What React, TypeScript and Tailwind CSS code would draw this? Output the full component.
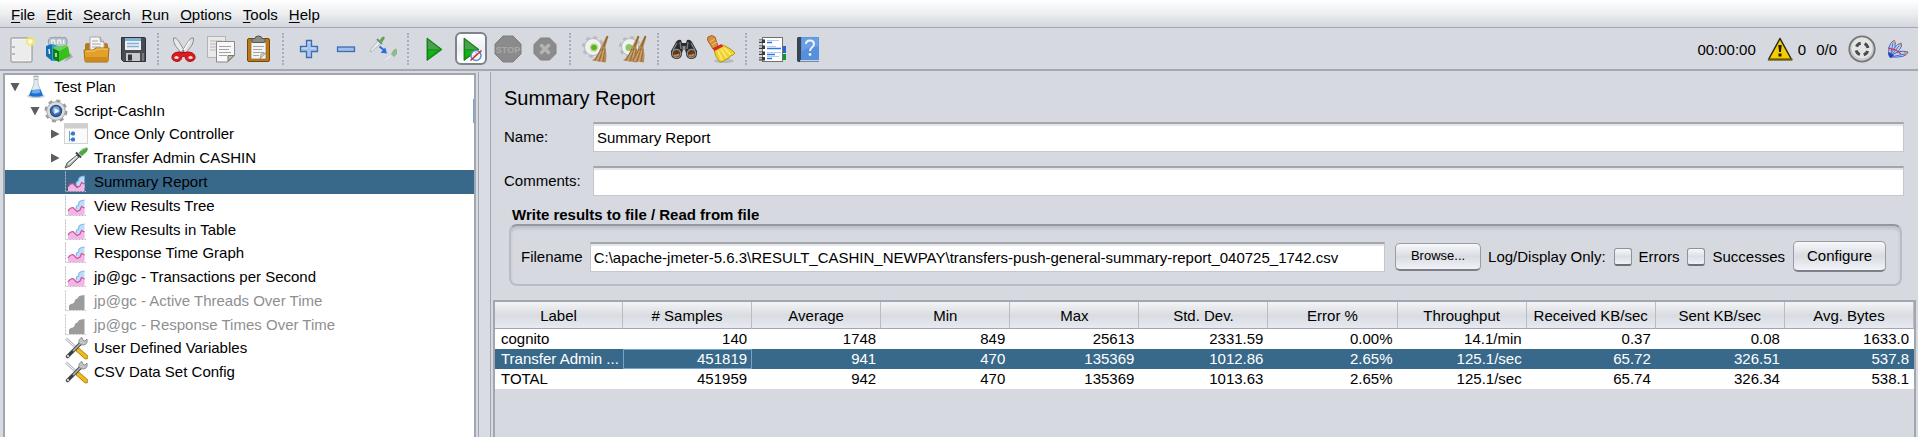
import type { ReactNode } from "react";

function Svg({ children, size = 28 }: { children: ReactNode; size?: number }) {
  return (
    <svg width={size} height={size} viewBox={`0 0 ${size} ${size}`} aria-hidden="true" className="shrink-0">
      {children}
    </svg>
  );
}

/* ---------- toolbar icons ---------- */

const NewIcon = () => (
  <Svg>
    <rect x="3" y="3" width="21" height="24" rx="1" fill="#f4f4f4" stroke="#8a8a8a" />
    <rect x="5" y="5" width="17" height="20" fill="#ececec" />
    <path d="M4 12h3M4 19h3" stroke="#a9a9a9" strokeWidth="1.5" />
    <circle cx="22.500" cy="6.500" r="4.800" fill="#f6e86a" opacity=".75" />
    <circle cx="22.500" cy="6.500" r="2.200" fill="#fffbd0" />
  </Svg>
);

const TemplatesIcon = () => (
  <Svg>
    <path d="M4 10C2 5 5 1 8 3q2-2 4 0 3-2 5 0 4-2 5 2 1 4-2 7H5z" fill="#b9c4cb" stroke="#8e9aa2" />
    <path d="M7 9Q6 5 8 5t2 4M13 9q-1-4 1-4t2 4M19 9q-1-3 0-4" stroke="#f1f4f6" strokeWidth="1.400" fill="none" />
    <path d="m1 11 6-2v17l-6-5z" fill="#1270b2" />
    <path d="m7 9 6 2v15H7z" fill="#2f9cda" />
    <path d="m25 18 3 4-9 5z" fill="#7c8084" opacity=".55" />
    <path d="m8 13 6 3v11l-6-3z" fill="#12800f" />
    <path d="m14 16 9-5 2 10-11 6z" fill="#35c01c" />
    <path d="m8 13 3-2 4 1 5-2 3 1-9 5z" fill="#67d44d" />
    <path d="m4 14 .5 5M11 18v4" stroke="#fff" strokeWidth="1.300" />
  </Svg>
);

const OpenIcon = () => (
  <Svg>
    <path d="M3 10q0-2 2-2h19q2 0 2 2v14H3z" fill="#b97a1a" />
    <path d="M8 2h10l4 5v11H8z" fill="#f5f5f5" stroke="#a9a9a9" />
    <path d="m18 2 .5 4.500L22 7" fill="#ccc" stroke="#999" />
    <path d="M10 6h6M10 9h9M10 12h9" stroke="#a5a5a5" />
    <path d="M2 15h9l3-2h13l-1 13q0 1-1 1H4q-1 0-1-1z" fill="#e2a02c" stroke="#a66d10" />
    <path d="M3.500 16H12l3-2h11" stroke="#f8cf70" fill="none" />
    <path d="M4 22h21.500l-.5 4H4z" fill="#cf8b18" />
  </Svg>
);

const SaveIcon = () => (
  <Svg>
    <path d="M2.500 2.500h23q1 0 1 1v23h-22l-2-2z" fill="#4b4c52" stroke="#303136" />
    <rect x="6" y="3" width="16" height="12" fill="#e9f1f8" />
    <path d="M6 3h16v3H6z" fill="#7fb0d6" />
    <path d="M8 8.500h12M8 11.500h12" stroke="#8ab0ce" strokeWidth="1.300" />
    <rect x="7" y="18" width="14" height="8" fill="#c7c8cc" />
    <rect x="9" y="19.500" width="4" height="6" fill="#35363a" />
    <path d="M23 18h2v8h-2z" fill="#77787e" />
  </Svg>
);

const CutIcon = () => (
  <Svg>
    <path d="M3.500 3q3-1 5 3l8 13-4 1L5 10Q3 6 3.500 3z" fill="#e9eaea" stroke="#8b8d90" />
    <path d="M23.500 3q-3-1-5 3l-8 13 4 1L22 10q2-4 1.500-7z" fill="#dfe0e0" stroke="#8b8d90" />
    <path d="m19.500 6-6 10" stroke="#fff" strokeWidth="1.400" />
    <circle cx="13.500" cy="16" r="1" fill="#6b6d70" />
    <path d="M12 17.500c-3-1-9-.5-10 4-1 5 7 6.500 9 3 1-2 .5-3 2.500-3s1.500 1 2.500 3c2 3.500 10 2 9-3-1-4.500-7-5-10-4z" fill="#dc1a20" stroke="#a80d12" />
    <ellipse cx="6.500" cy="22.500" rx="2.200" ry="1.500" fill="#e6dcdf" />
    <ellipse cx="20.500" cy="22.500" rx="2.200" ry="1.500" fill="#e6dcdf" />
  </Svg>
);

const CopyIcon = () => (
  <Svg>
    <rect x=".5" y="1.500" width="18" height="21" fill="#e9e9e9" stroke="#b3b3b3" />
    <path d="M3 6h12M3 9h9M3 12h12M3 15h9" stroke="#b9b9b9" strokeWidth="1.200" />
    <path d="M9.500 6.500h18v14l-7 6.500h-11z" fill="#f8f8f8" stroke="#8a8a8a" />
    <path d="M12 11.500h12M12 14.500h10M12 17.500h12M12 20.500h8" stroke="#a3a3a3" strokeWidth="1.200" />
    <path d="m27 20.500-6 6v-6z" fill="#b6bcae" stroke="#74786d" />
  </Svg>
);

const PasteIcon = () => (
  <Svg>
    <rect x="3.500" y="3.500" width="22" height="23" rx="1.500" fill="#bd7817" stroke="#74480b" />
    <rect x="7" y="7" width="15" height="17" fill="#f4f4f4" stroke="#8c6a38" strokeWidth=".7" />
    <path d="M9 11.500h11M9 14.500h9M9 17.500h11M9 20.500h6" stroke="#a6a6a6" strokeWidth="1.200" />
    <path d="m22 18-6 6 1-5z" fill="#c9ccc4" stroke="#888" strokeWidth=".6" />
    <path d="M8 3.500h3q0-2.500 3.500-2.500T18 3.500h3v3q0 1-1 1H9q-1 0-1-1z" fill="#8b8d85" stroke="#54564f" />
  </Svg>
);

const PlusIcon = () => (
  <Svg>
    <path d="M11.500 5.500h5v6h6v5h-6v6h-5v-6h-6v-5h6z" fill="#a9c4ea" stroke="#3c6eb4" strokeWidth="1.300" />
    <path d="M13 7.500h2M7.500 13h5M15.500 13h5" stroke="#dbe7f8" />
  </Svg>
);

const MinusIcon = () => (
  <Svg>
    <rect x="5.500" y="12" width="17" height="4.500" fill="#a0bee8" stroke="#3c6eb4" strokeWidth="1.300" />
  </Svg>
);

const ToggleIcon = () => (
  <Svg>
    <path d="m1 17 1-3 7-8 2.500 2.500-8 7.500z" fill="#e9ecee" stroke="#a9aeb1" strokeWidth=".8" />
    <path d="m8 4 5 5" stroke="#7c8780" strokeWidth="1.800" />
    <path d="m10.500 5.500 2-3q4-2.500 3 1.500l-2.500 3.500z" fill="#5ca855" />
    <path d="m10.500 11.500 5 4" stroke="#2a6fe0" strokeWidth="1.800" />
    <path d="m18 18.500-6.500-.8 4.800-5.200z" fill="#2a6fe0" />
    <g opacity=".6">
      <path d="m14 27 1-2.500 6-5 2 2-6 4.500z" fill="#eef1f1" stroke="#c3c7c7" strokeWidth=".6" />
      <path d="m22 19 2.500-4q3-2.500 3.500 0v4l-3 3z" fill="#5ca855" />
    </g>
  </Svg>
);

const PlayShape = () => (
  <>
    <path d="M7 3v22.500L22 14.500z" fill="#119a14" stroke="#0d6c10" strokeWidth=".8" />
    <path d="M8 5v9l12 .3z" fill="#4f9d52" />
    <path d="M8.500 15.500v7.500l9-7.500z" fill="#12b512" />
  </>
);

const PlayIcon = () => (
  <Svg>
    <PlayShape />
  </Svg>
);

const PlayNoPauseIcon = () => (
  <Svg>
    <PlayShape />
    <circle cx="19" cy="20.500" r="5" fill="#f2f6fb" stroke="#5b8fc9" strokeWidth="1.500" />
    <path d="M19 17v4h-3" stroke="#8aaed5" fill="none" />
    <path d="m13.500 25.500 11-10" stroke="#d8222a" strokeWidth="1.500" />
  </Svg>
);

const StopIcon = () => (
  <Svg>
    <path d="M9 1h10l8 8v10l-8 8H9l-8-8V9z" fill="#8b8b8b" stroke="#7f7f7f" />
    <text x="14" y="18" textAnchor="middle" fontFamily="Liberation Sans, sans-serif" fontWeight="bold" fontSize="9" fill="#a9a9a9">STOP</text>
  </Svg>
);

const ShutdownIcon = () => (
  <Svg>
    <path d="M9.500 3h9l6.500 6.500v9L18.500 25h-9L3 18.500v-9z" fill="#8b8b8b" stroke="#818181" />
    <path d="m9.500 9.500 9 9m0-9-9 9" stroke="#b5b5b5" strokeWidth="3.500" />
  </Svg>
);

const Broom = ({ x }: { x: number }) => (
  <g transform={`translate(${x} 0)`}>
    <path d="m23.500 1 2 .5-3 10q1.500 8 .5 16l-14-2q6-4 8.500-13z" fill="#b98d57" />
    <path d="M18 14 12 25.500M20 13 16 26.500M22 14l-2 13" stroke="#94693a" fill="none" />
    <path d="m18.500 16-5 10M21 15l-3 12" stroke="#d8b484" strokeWidth=".8" />
    <path d="m24.500 1-4 11" stroke="#8a6232" strokeWidth="1.200" />
  </g>
);

const GearShape = ({ cx, cy, r, fill = "#f0f1f1" }: { cx: number; cy: number; r: number; fill?: string }) => (
  <>
    <circle cx={cx} cy={cy} r={r} fill="none" stroke="#b9bcbe" strokeWidth="5" strokeDasharray={`${(r * Math.PI) / 8} ${(r * Math.PI) / 8}`} />
    <circle cx={cx} cy={cy} r={r} fill={fill} stroke="#b5b8ba" />
  </>
);

const ClearIcon = () => (
  <Svg>
    <GearShape cx={11} cy={12} r={8.5} />
    <circle cx="12" cy="12.500" r="4.200" fill="#b9d99a" />
    <circle cx="12" cy="12.500" r="2.800" fill="#5db51b" />
    <Broom x={1} />
  </Svg>
);

const ClearAllIcon = () => (
  <Svg>
    <GearShape cx={11} cy={12} r={8.5} />
    <circle cx="10" cy="12.500" r="3.500" fill="#8fc668" />
    <Broom x={-5} />
    <Broom x={2} />
  </Svg>
);

const BinocularsIcon = () => (
  <Svg size={30}>
    <path d="M7 8q2-3 5-2l1 3h4l1-3q3-1 5 2l5 9q1 7-5 8-6 0-6-6l-1-3h-2l-1 3q0 6-6 6-6-1-5-8z" fill="#292a2c" />
    <path d="m8 9-4 7M22 9l4 7M11 8l1 7M19 8l-1 7" stroke="#77797c" strokeWidth="1.500" />
    <circle cx="7.500" cy="19.500" r="4.200" fill="#5c3a20" stroke="#8b8c8e" strokeWidth="1.200" />
    <circle cx="22.500" cy="19.500" r="4.200" fill="#5c3a20" stroke="#8b8c8e" strokeWidth="1.200" />
    <path d="M5 21a3.500 3.500 0 0 0 5-1M20 21a3.500 3.500 0 0 0 5-1" stroke="#d58347" strokeWidth="2" fill="none" />
    <path d="M13.500 12h3v4h-3z" fill="#8a8c8f" />
  </Svg>
);

const SearchResetIcon = () => (
  <Svg size={30}>
    <ellipse cx="18" cy="27" rx="10" ry="2" fill="#9a9ca3" opacity=".5" />
    <path d="M2 3q4-3 7 0l3 9-5 3-5-8q-1-2 0-4z" fill="#d8903a" stroke="#9a5a17" strokeWidth=".9" />
    <path d="m4 8 5-3M6 11l5-3" stroke="#f1bd78" />
    <path d="m8 16 9-5q9 4 12 8-2 3-5 3 0 3-4 3-2 3-6 3-4-3-6-12z" fill="#efd534" stroke="#b8960e" />
    <path d="m12 17 4 9M15 15l6 9M18 14l7 7" stroke="#fbf08b" strokeWidth="1.200" />
    <path d="m6.500 14.500 9-4.500 1.500 2.500-8.500 4.500z" fill="#dc2626" />
  </Svg>
);

const FunctionIcon = () => (
  <Svg>
    <path d="M24 11h4v7h-4z" fill="#2365df" />
    <path d="M24 19h4v6h-4z" fill="#0a9d23" />
    <rect x="4.500" y="2.500" width="20" height="24" fill="#fff" stroke="#70706e" />
    {[6, 12, 18, 23.5].map((y) => (
      <g key={y}>
        <rect x="1" y={y - 1.5} width="6" height="3.500" fill="#3a3a3a" />
        <rect x="1" y={y - 1} width="3" height="2" fill="#b8b8b8" />
      </g>
    ))}
    <path d="M9 5.500h12M9 11.500h9M9 17.500h14M9 21.500h12" stroke="#b3cdf1" />
    <path d="M9 7.500h5M9 13.500h14M9 19.500h8M9 23.500h5" stroke="#2c77e6" strokeWidth="1.600" />
  </Svg>
);

const HelpIcon = () => (
  <Svg>
    <path d="M2 3.500Q2 2 3.500 2H24v25H4q-2 0-2-2z" fill="#28405f" />
    <path d="M5 24.500h19v2H5z" fill="#c5d5e8" />
    <path d="M6 2h18v23H6z" fill="#568fdb" />
    <path d="M2.500 3 6 2v23l-3.500 1z" fill="#3b4654" />
    <path d="M6.500 2.500h17v9q-10 0-17 5z" fill="#74a6e7" opacity=".7" />
    <path d="M11 9q0-3.500 4-3.500t4 3.500q0 2-2 3.500t-2 3.500" stroke="#edf4fd" strokeWidth="2" fill="none" />
    <circle cx="15" cy="19.500" r="1.400" fill="#edf4fd" />
  </Svg>
);

const WarningIcon = () => (
  <Svg>
    <path d="M14 3.500 25.500 24.500h-23z" fill="#f5cd05" stroke="#28250f" strokeWidth="1.500" strokeLinejoin="round" />
    <path d="M2 23.500h24.500v2H2z" fill="#6f5d05" />
    <path d="M12.300 10h3.400l-.8 7h-1.800zM12.500 18.500h3v3h-3z" fill="#1d1b0e" />
  </Svg>
);

const StatusGearIcon = () => (
  <Svg>
    <circle cx="14" cy="14" r="12.700" fill="#c9caca" stroke="#757677" strokeWidth="1.800" />
    <circle cx="14" cy="13" r="10.500" fill="#e4e5e5" />
    <circle cx="14" cy="14" r="6" fill="none" stroke="#4a4b4c" strokeWidth="3" strokeDasharray="5.400 4.025" strokeDashoffset="-2" />
  </Svg>
);

const FeatherIcon = () => (
  <Svg size={24}>
    <g stroke="#3d68cc" strokeWidth="1" fill="#c3d0ec">
      <path d="M4 20Q0 9 8 3q4 5-4 17z" />
      <path d="M4 20Q8 8 15 6q3 6-11 14z" />
      <path d="M4 20Q12 12 22 15q-1 6-18 5z" />
    </g>
    <path d="M4 20 7 6M4 20 13 9M4 20l15-3" stroke="#4a72cc" fill="none" />
    <path d="m2 11 8 2 5 4" stroke="#d43b54" strokeWidth="1.300" fill="none" />
    <path d="m7 4 2 1M13 7l2 1M18 16l3 1" stroke="#e58c3c" strokeWidth="2" />
    <path d="M2 15q0 5 3 6l3-3z" fill="#2446b4" />
  </Svg>
);

/* ---------- tree icons ---------- */

const FlaskIcon = () => (
  <Svg size={24}>
    <ellipse cx="12" cy="21" rx="9" ry="2" fill="#6f9fd0" opacity=".5" />
    <path d="M10 1h4v8l5 12q-7 2.500-14 0l5-12z" fill="#e3eaf0" stroke="#bcc5ce" />
    <path d="m7.500 15 9-.5 2.500 6q-7 2.500-14 0z" fill="#1f6fd0" />
    <path d="m8.500 15 7-.5 1 3q-4 1.500-9 .5z" fill="#6aaaf0" />
    <path d="M9.500 1.500h5M10.500 4.500h3" stroke="#a3adb6" />
  </Svg>
);

const ThreadGroupIcon = () => (
  <Svg size={24}>
    <circle cx="12" cy="12" r="9.500" fill="none" stroke="#989a9d" strokeWidth="4" strokeDasharray="3.730 3.730" />
    <circle cx="12" cy="12" r="9.300" fill="#dcdddf" stroke="#a5a7aa" />
    <circle cx="12" cy="12" r="5.600" fill="#3b68a8" stroke="#2b4c80" strokeWidth="1.200" />
    <circle cx="12" cy="11" r="3.600" fill="#7ba4d8" />
    <path d="M10.500 9v6l5-3z" fill="#e9f1fb" />
  </Svg>
);

const ControllerIcon = () => (
  <Svg size={24}>
    <rect x=".5" y="1.500" width="23" height="20" fill="#fbfbfb" stroke="#d2d2d2" />
    <path d="M1 2h22v4.500H1z" fill="#cfcfcf" />
    <path d="M5.500 9v10.500M5.500 12H8M5.500 17.500H8" stroke="#7c9cc9" fill="none" />
    <rect x="7" y="9.500" width="4" height="4" rx="1.500" fill="#3775cf" />
    <rect x="7" y="15.500" width="4" height="4" rx="1.500" fill="#3775cf" />
  </Svg>
);

const SamplerIcon = () => (
  <Svg size={24}>
    <path d="m1 22 2-5 10-8 2 2-9 9z" fill="#a9adae" stroke="#5a5e60" />
    <path d="m4 18.500 9-8" stroke="#f2f4f4" strokeWidth="1.200" />
    <path d="m12 6.500 5 5" stroke="#3d4144" strokeWidth="2" />
    <path d="m14.500 7 3.500-4q4.500-2.500 5.500-1t-1 4l-4.500 4z" fill="#4ea640" />
    <path d="m17 5 3-2.500q2-.5 2 .5" stroke="#a5da96" fill="none" />
  </Svg>
);

const ChartIcon = ({ off = false }: { off?: boolean }) => (
  <Svg size={24}>
    <path d="M1.500 1.500v20H22" stroke={off ? "#c4c4c4" : "#bcbabf"} fill="none" strokeDasharray="2 1" />
    {off ? (
      <path d="M5 21v-4.500q1.500-2 4-2l1.500-1.500q0-3 3-3.500 1-3 4-3l3-.5V21z" fill="#9c9c9c" />
    ) : (
      <>
        <path d="M12.500 16q-2-4 2-5 0-4 3.500-4.500l2.500-.5v12z" fill="#bfdcfa" />
        <path d="M12.500 15q-1-3.500 2-4 0-4 3.500-4.500l2.500-.5" stroke="#86b5ea" strokeWidth="1.200" fill="none" />
        <path d="M4 21v-4.500q2-3 5-3l4 4 3-1.500 2-3q1.500 0 2.500 1.500V21z" fill="#f6b3ea" />
        <path d="M4 17q2-3.500 5-3.500l4 4 3-1.500 1.500-3.500 3 1.500" stroke="#c8508a" strokeWidth="1.100" fill="none" />
      </>
    )}
  </Svg>
);

const ConfigIcon = () => (
  <Svg size={24}>
    <path d="m2 2.500 12 11" stroke="#9ea2a4" strokeWidth="2.400" />
    <path d="m2 2.500 12 11" stroke="#eff0f1" strokeWidth="1.200" />
    <path d="m14 14 8 7" stroke="#a97908" strokeWidth="4.600" strokeLinecap="round" />
    <path d="m14 14 8 7" stroke="#f0bb18" strokeWidth="3.200" strokeLinecap="round" />
    <path d="M17 7 3.500 20.500" stroke="#3b3f41" strokeWidth="3.400" strokeLinecap="round" />
    <path d="M17 7 9 15" stroke="#b5babc" strokeWidth="1.600" />
    <path d="M15 7q-1-4 3-5.500l1 3 2 .5 2-2q1 5-3 6-3 .5-5-2z" fill="#c0c4c5" stroke="#7b7f81" strokeWidth=".8" />
    <circle cx="4" cy="20" r="1.200" fill="#c9cccc" />
  </Svg>
);

/* ---------- data ---------- */

const menus = ["File", "Edit", "Search", "Run", "Options", "Tools", "Help"];

type Tool = { label: string; icon: ReactNode; active?: boolean; disabled?: boolean };

const toolGroups: Tool[][] = [
  [
    { label: "New", icon: <NewIcon /> },
    { label: "Templates", icon: <TemplatesIcon /> },
    { label: "Open", icon: <OpenIcon /> },
    { label: "Save", icon: <SaveIcon /> },
  ],
  [
    { label: "Cut", icon: <CutIcon /> },
    { label: "Copy", icon: <CopyIcon /> },
    { label: "Paste", icon: <PasteIcon /> },
  ],
  [
    { label: "Expand all", icon: <PlusIcon /> },
    { label: "Collapse all", icon: <MinusIcon /> },
    { label: "Toggle", icon: <ToggleIcon /> },
  ],
  [
    { label: "Start", icon: <PlayIcon /> },
    { label: "Start no pauses", icon: <PlayNoPauseIcon />, active: true },
    { label: "Stop", icon: <StopIcon />, disabled: true },
    { label: "Shutdown", icon: <ShutdownIcon />, disabled: true },
  ],
  [
    { label: "Clear", icon: <ClearIcon /> },
    { label: "Clear all", icon: <ClearAllIcon /> },
  ],
  [
    { label: "Search", icon: <BinocularsIcon /> },
    { label: "Reset search", icon: <SearchResetIcon /> },
  ],
  [
    { label: "Function helper", icon: <FunctionIcon /> },
    { label: "Help", icon: <HelpIcon /> },
  ],
];

type Node = { label: string; level: number; icon: ReactNode; arrow?: "open" | "closed"; selected?: boolean; disabled?: boolean; marked?: boolean };

const nodes: Node[] = [
  { label: "Test Plan", level: 0, icon: <FlaskIcon />, arrow: "open" },
  { label: "Script-CashIn", level: 1, icon: <ThreadGroupIcon />, arrow: "open", marked: true },
  { label: "Once Only Controller", level: 2, icon: <ControllerIcon />, arrow: "closed" },
  { label: "Transfer Admin CASHIN", level: 2, icon: <SamplerIcon />, arrow: "closed" },
  { label: "Summary Report", level: 2, icon: <ChartIcon />, selected: true },
  { label: "View Results Tree", level: 2, icon: <ChartIcon /> },
  { label: "View Results in Table", level: 2, icon: <ChartIcon /> },
  { label: "Response Time Graph", level: 2, icon: <ChartIcon /> },
  { label: "jp@gc - Transactions per Second", level: 2, icon: <ChartIcon /> },
  { label: "jp@gc - Active Threads Over Time", level: 2, icon: <ChartIcon off />, disabled: true },
  { label: "jp@gc - Response Times Over Time", level: 2, icon: <ChartIcon off />, disabled: true },
  { label: "User Defined Variables", level: 2, icon: <ConfigIcon /> },
  { label: "CSV Data Set Config", level: 2, icon: <ConfigIcon /> },
];

const indents = ["pl-0", "pl-5", "pl-10"];

const columns = ["Label", "# Samples", "Average", "Min", "Max", "Std. Dev.", "Error %", "Throughput", "Received KB/sec", "Sent KB/sec", "Avg. Bytes"];

const rows = [
  ["cognito", "140", "1748", "849", "25613", "2331.59", "0.00%", "14.1/min", "0.37", "0.08", "1633.0"],
  ["Transfer Admin ...", "451819", "941", "470", "135369", "1012.86", "2.65%", "125.1/sec", "65.72", "326.51", "537.8"],
  ["TOTAL", "451959", "942", "470", "135369", "1013.63", "2.65%", "125.1/sec", "65.74", "326.34", "538.1"],
];
const selectedRow = 1;

/* ---------- parts ---------- */

function MenuBar() {
  return (
    <nav className="flex h-7 items-center gap-px border-b border-[#a4a8b3] bg-linear-to-b from-white via-[#eceef0] to-[#d3d6dc] px-[6px] pt-[2px]">
      {menus.map((m) => (
        <button key={m} type="button" className="px-[5px]">
          <span className="underline underline-offset-2">{m[0]}</span>
          {m.slice(1)}
        </button>
      ))}
    </nav>
  );
}

function Toolbar() {
  return (
    <div className="flex h-[43px] items-center border-b-2 border-[#a4a8b3] pl-[3px] pr-2">
      {toolGroups.map((group, i) => (
        <div key={i} className="flex items-center">
          {i > 0 && (
            <div className="flex w-[14px] justify-center">
              <div className="h-8 border-l-2 border-dotted border-[#a9adb7]" />
            </div>
          )}
          {group.map((t) => (
            <button key={t.label} type="button" aria-label={t.label} disabled={t.disabled} className="flex h-[34px] w-[37px] items-center justify-center">
              {t.active ? (
                <span className="flex h-[33px] w-8 items-center justify-center overflow-hidden rounded-md border-2 border-[#7d828d] bg-linear-to-b from-white via-[#eceef2] to-white">
                  {t.icon}
                </span>
              ) : (
                t.icon
              )}
            </button>
          ))}
        </div>
      ))}
      <div className="ml-auto flex items-center">
        <span className="pt-[2px]">00:00:00</span>
        <span className="ml-[10px] flex items-center gap-1">
          <WarningIcon />
          <span className="pt-[2px]">0</span>
        </span>
        <span className="ml-[10px] mr-[11px] pt-[2px]">0/0</span>
        <StatusGearIcon />
        <span className="ml-[10px]">
          <FeatherIcon />
        </span>
      </div>
    </div>
  );
}

function Tree() {
  return (
    <aside className="ml-[3px] mt-[2px] w-[473px] shrink-0 border-2 border-b-0 border-[#a2a6b1] bg-white">
      <ul className="grid h-[309px] auto-rows-fr">
        {nodes.map((n) => (
          <li
            key={n.label}
            className={`flex min-h-0 items-center border-r ${n.marked ? "border-[#73a4d1]" : "border-transparent"} ${n.selected ? "bg-[#39698a]" : ""} ${n.disabled ? "text-[#8e8f91]" : "text-black"}`}
          >
            <div className={`flex items-center ${indents[n.level]}`}>
              <span className="flex w-[19px] justify-center">
                {n.arrow && (
                  <svg width="10" height="10" viewBox="0 0 10 10" aria-hidden="true">
                    <path d={n.arrow === "open" ? "M.5 1h9L5 9.500z" : "M1 .5v9L9.500 5z"} fill="#5d5d5f" />
                  </svg>
                )}
              </span>
              {n.icon}
              <span className="ml-[6px] whitespace-nowrap">{n.label}</span>
            </div>
          </li>
        ))}
      </ul>
    </aside>
  );
}

const fieldClass =
  "h-[30px] min-w-0 flex-1 border border-[#c4c7cd] border-t-2 border-t-[#a3a6ab] bg-white px-[3px] shadow-[inset_0_2px_1px_#e4e5e8] outline-none";

const buttonClass =
  "rounded-[5px] border border-[#989ca5] border-b-2 border-b-[#7c8089] bg-linear-to-b from-[#f7f8fa] via-[#d9dce2] to-[#f1f3f8]";

function Check({ id, label }: { id: string; label: string }) {
  return (
    <span className="ml-2 flex items-center gap-[7px]">
      <input
        id={id}
        type="checkbox"
        className="size-[18px] appearance-none rounded-[3px] border border-[#8e929c] border-b-2 border-b-[#6c707c] bg-linear-to-b from-[#f8f9fa] via-[#dcdfe4] to-[#f0f2f6]"
      />
      <label htmlFor={id}>{label}</label>
    </span>
  );
}

function FilePanel() {
  return (
    <section className="ml-[5px] mr-[3px] mt-[10px]">
      <h2 className="pl-[3px] font-bold leading-[18px]">Write results to file / Read from file</h2>
      <div className="flex h-[62px] items-center rounded-lg border-2 border-[#b9bcc3] border-t-[#94979d] pl-[10px] pr-[14px] pt-[3px] shadow-[inset_0_3px_3px_#bfc2c9]">
        <label htmlFor="filename" className="mr-[7px]">Filename</label>
        <input id="filename" className={fieldClass} defaultValue="C:\apache-jmeter-5.6.3\RESULT_CASHIN_NEWPAY\transfers-push-general-summary-report_040725_1742.csv" />
        <button type="button" className={`ml-[10px] mr-[7px] h-7 w-[86px] text-[13px] ${buttonClass}`}>Browse...</button>
        <span>Log/Display Only:</span>
        <Check id="errors" label="Errors" />
        <Check id="successes" label="Successes" />
        <button type="button" className={`ml-2 h-[31px] w-[93px] ${buttonClass}`}>Configure</button>
      </div>
    </section>
  );
}

function ResultsTable() {
  return (
    <div className="ml-[2px] mr-[2px] mt-[14px] flex-1 border-2 border-b-0 border-[#a2a6b1]">
      <table className="w-full table-fixed border-separate border-spacing-0">
        <thead>
          <tr className="bg-linear-to-b from-[#f3f4f6] via-[#d9dce1] to-[#e8ebf2]">
            {columns.map((c) => (
              <th key={c} scope="col" className="h-[27px] whitespace-nowrap border-b border-r border-b-[#a2a6b1] border-r-[#b9bcc5] p-0 font-normal leading-[25px] first:w-32">
                {c}
              </th>
            ))}
          </tr>
        </thead>
        <tbody>
          {rows.map((r, i) => (
            <tr key={r[0]} className={i === selectedRow ? "bg-[#39698a] text-white" : "bg-white"}>
              {r.map((v, j) => (
                <td
                  key={j}
                  className={`h-5 whitespace-nowrap border p-0 leading-[18px] ${j === 0 ? "pl-[5px] text-left" : "pr-1 text-right"} ${i === selectedRow && j === 1 ? "border-[#73a4d1]" : "border-transparent"}`}
                >
                  {v}
                </td>
              ))}
            </tr>
          ))}
        </tbody>
      </table>
    </div>
  );
}

export default function App() {
  return (
    <div className="flex min-h-screen flex-col bg-[#d6d9df] font-['Liberation_Sans',Arial,sans-serif] text-[15px] leading-5 text-black">
      <MenuBar />
      <Toolbar />
      <div className="flex flex-1">
        <Tree />
        <div className="ml-[2px] mt-px w-[13px] shrink-0 border-x border-[#a2a6b1] bg-[#d9dce2]" />
        <main className="flex min-w-0 flex-1 flex-col">
          <div className="ml-[13px] mr-[14px] mt-[14px]">
            <h1 className="text-xl leading-[26px]">Summary Report</h1>
            <div className="mt-[11px] flex items-center">
              <label htmlFor="name" className="w-[89px]">Name:</label>
              <input id="name" className={fieldClass} defaultValue="Summary Report" />
            </div>
            <div className="mt-[14px] flex items-center">
              <label htmlFor="comments" className="w-[89px]">Comments:</label>
              <input id="comments" className={fieldClass} />
            </div>
          </div>
          <div className="mx-[13px]">
            <FilePanel />
          </div>
          <ResultsTable />
        </main>
      </div>
    </div>
  );
}
